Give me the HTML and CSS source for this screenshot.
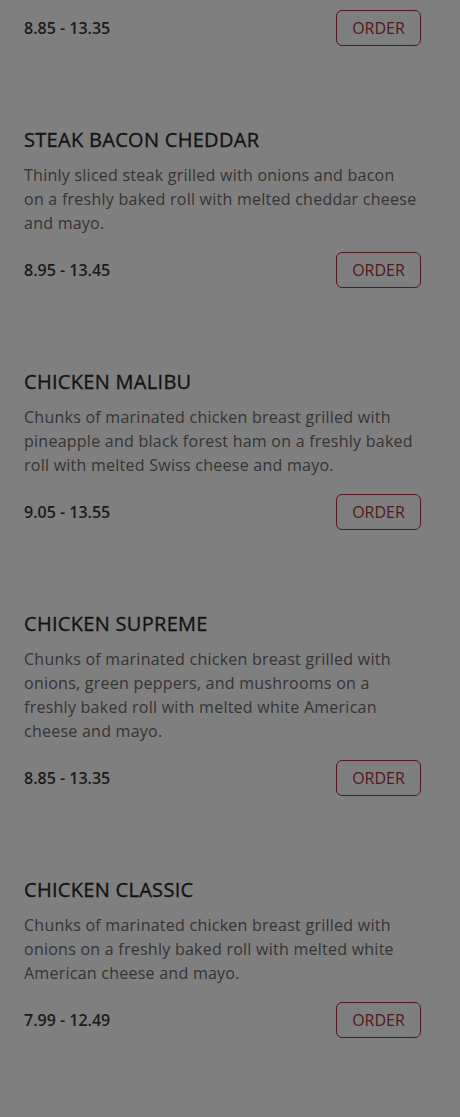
FILE: index.html
```html
<!DOCTYPE html>
<html lang="en">
<head>
<meta charset="utf-8">
<title>Menu</title>
<link rel="stylesheet" href="styles.css">
</head>
<body>
<main class="menu">
  <section class="item item-first">
    <div class="price-row">
      <span class="price">8.85 - 13.35</span>
      <button class="order">ORDER</button>
    </div>
  </section>
  <section class="item">
    <h2 class="title">STEAK BACON CHEDDAR</h2>
    <p class="desc">Thinly sliced steak grilled with onions and bacon on a freshly baked roll with melted cheddar cheese and mayo.</p>
    <div class="price-row">
      <span class="price">8.95 - 13.45</span>
      <button class="order">ORDER</button>
    </div>
  </section>
  <section class="item">
    <h2 class="title">CHICKEN MALIBU</h2>
    <p class="desc">Chunks of marinated chicken breast grilled with pineapple and black forest ham on a freshly baked roll with melted Swiss cheese and mayo.</p>
    <div class="price-row">
      <span class="price">9.05 - 13.55</span>
      <button class="order">ORDER</button>
    </div>
  </section>
  <section class="item">
    <h2 class="title">CHICKEN SUPREME</h2>
    <p class="desc">Chunks of marinated chicken breast grilled with onions, green peppers, and mushrooms on a freshly baked roll with melted white American cheese and mayo.</p>
    <div class="price-row">
      <span class="price">8.85 - 13.35</span>
      <button class="order">ORDER</button>
    </div>
  </section>
  <section class="item">
    <h2 class="title">CHICKEN CLASSIC</h2>
    <p class="desc">Chunks of marinated chicken breast grilled with onions on a freshly baked roll with melted white American cheese and mayo.</p>
    <div class="price-row">
      <span class="price">7.99 - 12.49</span>
      <button class="order">ORDER</button>
    </div>
  </section>
</main>
<div class="overlay"></div>
</body>
</html>
```
FILE: styles.css
```css
html, body {
  margin: 0;
  padding: 0;
  background: #ffffff;
}
body {
  font-family: "Open Sans", "Liberation Sans", sans-serif;
  color: #333333;
}
.menu {
  padding: 10px 39px 0 24px;
  display: flex;
  flex-direction: column;
  gap: 80px;
}
.item {
  display: flex;
  flex-direction: column;
}
.title {
  margin: 0;
  font-size: 20px;
  line-height: 28px;
  font-weight: 400;
  letter-spacing: 0.3px;
  color: #262626;
  -webkit-text-stroke: 0.3px #262626;
}
.desc {
  margin: 9px 3px 17px 0;
  font-size: 16px;
  line-height: 24px;
  letter-spacing: 0.25px;
  color: #6a6a6a;
}
.price-row {
  display: flex;
  justify-content: space-between;
  align-items: center;
}
.price {
  font-size: 16px;
  font-weight: 600;
  color: #383838;
}
.order {
  width: 85px;
  height: 36px;
  border: 1px solid #a8323c;
  border-radius: 6px;
  background: transparent;
  color: #a8323c;
  font-family: "Open Sans", "Liberation Sans", sans-serif;
  font-size: 16px;
  padding: 0;
}
.overlay {
  position: fixed;
  inset: 0;
  background: rgba(0, 0, 0, 0.5);
}
```
